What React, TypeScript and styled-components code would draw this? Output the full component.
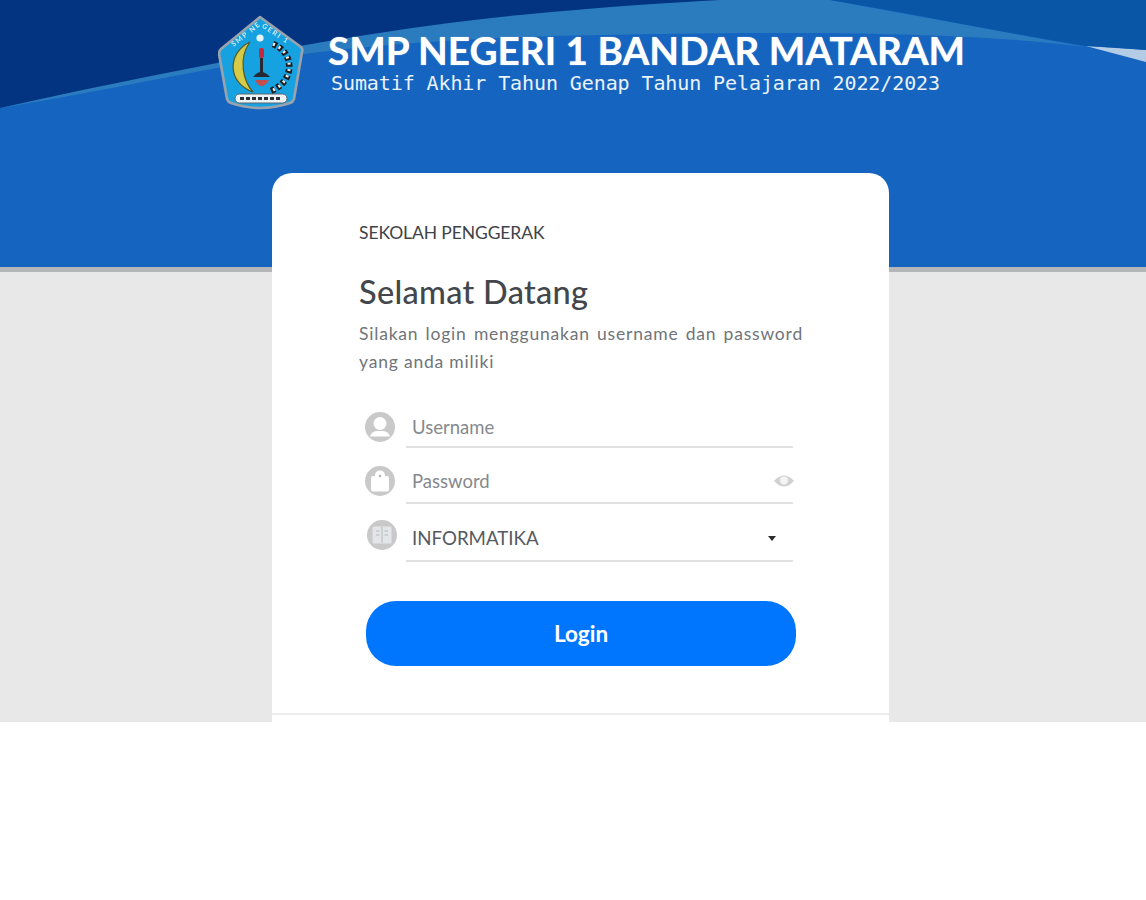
import React from "react";
import styled, { createGlobalStyle } from "styled-components";

const Global = createGlobalStyle`
  html, body { margin: 0; padding: 0; background: #fff; }
  body { font-family: Lato, "Liberation Sans", sans-serif; }
`;
const Page = styled.div`
  height: 722px;
  background: #e8e8e8;
  overflow: hidden;
`;
const Hero = styled.header`
  position: relative;
  height: 267px;
  background: #1565c0;
  border-bottom: 5px solid #b4b6ba;
  overflow: hidden;
`;
const Waves = styled.svg`
  position: absolute;
  inset: 0;
  width: 1146px;
  height: 267px;
`;
const Brand = styled.div`
  position: relative;
  display: flex;
  align-items: flex-start;
  gap: 24px;
  padding: 15px 0 0 218px;
`;
const Crest = styled.svg`
  width: 86px;
  height: 96px;
  flex: none;
  filter: blur(0.6px);
`;
const BrandText = styled.div`
  padding-top: 13px;
  color: #fff;
`;
const School = styled.h1`
  margin: 0;
  font: 700 38.7px/44px Lato, sans-serif;
  white-space: nowrap;
  text-shadow: 0 0 1px rgba(255,255,255,.7);
`;
const Exam = styled.div`
  margin: -1px 0 0 3px;
  font: 400 20px/24px "DejaVu Sans Mono", monospace;
  letter-spacing: -0.1px;
  color: #eaf2fb;
  white-space: nowrap;
`;
const Card = styled.main`
  position: relative;
  width: 617px;
  height: 549px;
  box-sizing: border-box;
  margin: -99px 0 0 272px;
  padding: 47px 0 0;
  background: #fff;
  border-radius: 20px 20px 0 0;
`;
const Body = styled.div`
  padding: 0 86px 0 87px;
`;
const Eyebrow = styled.div`
  font: 400 17.5px/26px Lato, sans-serif;
  letter-spacing: -0.1px;
  color: #3f4347;
`;
const Title = styled.h2`
  margin: 27px 0 0;
  font: 500 32.5px/38px Lato, sans-serif;
  letter-spacing: 0.3px;
  color: #43474b;
`;
const Lead = styled.p`
  margin: 9px 0 0;
  font: 400 17.5px/28px Lato, sans-serif;
  letter-spacing: 0.8px;
  text-align: justify;
  color: #70747a;
`;
const Fields = styled.div`
  display: flex;
  flex-direction: column;
  margin: 36px 0 0 6px;
  width: 430px;
`;
const Field = styled.div<{ $h: number }>`
  display: flex;
  align-items: flex-start;
  height: ${(p) => p.$h}px;
`;
const Bubble = styled.svg<{ $x?: number }>`
  width: 30px;
  height: 30px;
  flex: none;
  margin: 0 ${(p) => 11 - (p.$x ?? 0)}px 0 ${(p) => p.$x ?? 0}px;
`;
const Control = styled.div<{ $h: number; $pad: number }>`
  flex: 1;
  height: ${(p) => p.$h}px;
  display: flex;
  align-items: center;
  justify-content: space-between;
  box-sizing: border-box;
  padding: 0 1px ${(p) => p.$pad}px 6px;
  margin-right: 2px;
  border-bottom: 2px solid #dfe1e3;
`;
const Placeholder = styled.span`
  font: 400 18.5px/24px Lato, sans-serif;
  color: #85898e;
`;
const Selected = styled.span`
  font: 400 18.7px/26px Lato, sans-serif;
  color: #565a60;
`;
const Caret = styled.span`
  width: 0;
  height: 0;
  margin-right: 16px;
  border-left: 4.5px solid transparent;
  border-right: 4.5px solid transparent;
  border-top: 5px solid #2b2d30;
`;
const Eye = styled.svg`
  width: 22px;
  height: 16px;
  margin-right: -3px;
`;
const Login = styled.button`
  display: block;
  width: 430px;
  height: 65px;
  margin: 39px 0 0 7px;
  border: 0;
  border-radius: 30px;
  background: #0076ff;
  color: #fff;
  font: 700 22.5px/24px Lato, sans-serif;
`;
const Rule = styled.hr`
  margin: 47px 0 0;
  height: 2px;
  border: 0;
  background: #ececec;
`;

const Crestmark = () => (
  <Crest viewBox="0 0 86 96" aria-hidden>
    <path d="M42 2 L83 32 Q85 34 84 37 L76 84 Q75 87 72 88 Q42 98 13 88 Q10 87 9 84 L1 39 Q1 36 3 34 Z" fill="#16a2e0" stroke="#9aa3ad" strokeWidth="2.6" strokeLinejoin="round" />
    <defs><path id="arc" d="M8 38 L42 11 L78 35" /></defs>
    <text fontFamily="Lato, sans-serif" fontSize="7" fontWeight="700" fill="#cfe9f6" letterSpacing="1.6">
      <textPath href="#arc" startOffset="10">SMP NEGERI 1</textPath>
    </text>
    <circle cx="42" cy="23" r="3.6" fill="#e6f5fb" />
    <path d="M32 27 C9 38 9 68 35 77 C25 66 20 43 32 27 Z" fill="#d6cb48" stroke="#54592a" strokeWidth="1.2" />
    <path d="M55 29 C77 38 77 66 53 76" fill="none" stroke="#1d1d20" strokeWidth="6.5" strokeDasharray="4 2.4" />
    <path d="M55 29 C77 38 77 66 53 76" fill="none" stroke="#eef2f4" strokeWidth="3" strokeDasharray="2 4.4" />
    <rect x="41" y="33" width="5" height="10" rx="2" fill="#c8283a" />
    <rect x="42" y="43" width="3" height="15" fill="#272a33" />
    <path d="M35 62 Q43 52 52 62 Z" fill="#272a33" />
    <path d="M37 65 H51 Q47 71 44 71 Q40 71 37 65 Z" fill="#c64e4c" />
    <rect x="17" y="79" width="52" height="9" rx="4.5" fill="#eef2f4" stroke="#5a6570" strokeWidth="1" />
    <path d="M22 83.5 H64" stroke="#2a3138" strokeWidth="3.2" strokeDasharray="4 2" />
  </Crest>
);

const PersonIcon = () => (
  <Bubble viewBox="0 0 30 30" aria-hidden>
    <circle cx="15" cy="15" r="15" fill="#c9c9c9" />
    <circle cx="15" cy="11.500" r="6.500" fill="#fff" />
    <path d="M5 24.500 Q6.500 19.500 11.500 19 H18.500 Q23.500 19.500 25 24.500 Z" fill="#fff" />
  </Bubble>
);
const LockIcon = () => (
  <Bubble viewBox="0 0 30 30" aria-hidden>
    <circle cx="15" cy="15" r="15" fill="#c9c9c9" />
    <path d="M6 12 Q6 10 8 10 H10 Q10 4.500 15 4.500 Q20 4.500 20 10 H22 Q24 10 24 12 V23 Q24 25.500 22 25.500 H8 Q6 25.500 6 23 Z" fill="#fff" />
    <circle cx="15" cy="10" r="1.200" fill="#b0b0b0" />
  </Bubble>
);
const BookIcon = () => (
  <Bubble $x={2} viewBox="0 0 30 30" aria-hidden>
    <circle cx="15" cy="15" r="15" fill="#c9c9c9" />
    <rect x="5.500" y="6.500" width="19" height="17" rx="1.500" fill="#e3e5e8" />
    <path d="M15 7 V23 M9 11 H12.500 M9 15 H12.500 M17.500 11 H21 M17.500 15 H21" stroke="#c4c7cb" strokeWidth="1.400" />
  </Bubble>
);

export default function App() {
  return (
    <>
      <Global />
      <Page>
        <Hero>
          <Waves viewBox="0 0 1146 267" aria-hidden>
            <rect width="1146" height="267" fill="#1565c0" />
            <path d="M0 108 C80 95 150 80 217 68 C300 52 420 38 600 35 C750 32 960 30 1086 47 L830 0 L0 0 Z" fill="#2a7cbf" />
            <path d="M0 108 C80 90 150 76 217 63 C300 44 420 25 520 15 C590 8 660 3 720 0 L0 0 Z" fill="#033482" />
            <path d="M1086 46 L1146 50 L1146 62 Z" fill="#b4cbe6" />
            <path d="M830 0 C920 15 1000 32 1086 46 C1105 47 1125 48 1146 50 L1146 0 Z" fill="#0a56a6" />
          </Waves>
          <Brand>
            <Crestmark />
            <BrandText>
              <School>SMP NEGERI 1 BANDAR MATARAM</School>
              <Exam>Sumatif Akhir Tahun Genap Tahun Pelajaran 2022/2023</Exam>
            </BrandText>
          </Brand>
        </Hero>
        <Card>
          <Body>
            <Eyebrow>SEKOLAH PENGGERAK</Eyebrow>
            <Title>Selamat Datang</Title>
            <Lead>Silakan login menggunakan username dan password yang anda miliki</Lead>
            <Fields>
              <Field $h={54}>
                <PersonIcon />
                <Control $h={36} $pad={4}><Placeholder>Username</Placeholder></Control>
              </Field>
              <Field $h={54}>
                <LockIcon />
                <Control $h={38} $pad={6}>
                  <Placeholder>Password</Placeholder>
                  <Eye viewBox="0 0 22 16" aria-hidden>
                    <path d="M1 8 Q11 -3 21 8 Q11 19 1 8 Z" fill="#cfd1d3" />
                    <circle cx="11" cy="7.500" r="4" fill="#f4f4f4" />
                  </Eye>
                </Control>
              </Field>
              <Field $h={42}>
                <BookIcon />
                <Control $h={42} $pad={4}>
                  <Selected>INFORMATIKA</Selected>
                  <Caret />
                </Control>
              </Field>
            </Fields>
            <Login>Login</Login>
          </Body>
          <Rule />
        </Card>
      </Page>
    </>
  );
}
